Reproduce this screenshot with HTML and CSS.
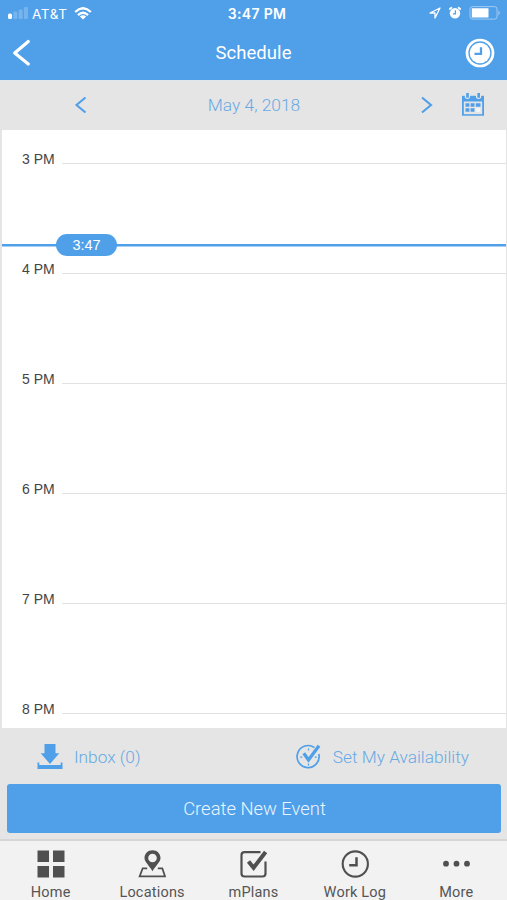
FILE: index.html
```html
<!DOCTYPE html>
<html lang="en">
<head>
<meta charset="utf-8">
<title>Schedule</title>
<link rel="stylesheet" href="styles.css">
</head>
<body>
<div class="app">
  <header class="header">
    <div class="status">
      <div class="status-left">
        <svg class="signal" width="20" height="12" viewBox="0 0 20 12" fill="#fff"><rect x="0" y="6.5" width="4" height="5.5" rx="1.5"/><g opacity=".22"><rect x="5.3" y="4.5" width="4" height="7.5" rx="1"/><rect x="10.6" y="2.5" width="4" height="9.5" rx="1"/><rect x="15.9" y="0" width="4" height="12" rx="1"/></g></svg>
        <span class="carrier">AT&amp;T</span>
        <svg class="wifi" width="18" height="13" viewBox="0 0 18 13" fill="none" stroke="#fff" stroke-width="2.3"><path d="M1.2 5Q9-2.6 16.8 5M4 8.1Q9 3.5 14 8.1"/><path d="M5.8 9.6Q9 7 12.2 9.6L9 12.6Z" fill="#fff" stroke="none"/></svg>
      </div>
      <span class="clock">3:47 PM</span>
      <div class="status-right">
        <svg width="12" height="12" viewBox="0 0 12 12" fill="none" stroke="#fff" stroke-width="1.3" stroke-linejoin="round"><path d="M11 1L1 6H6V11Z"/></svg>
        <svg width="14" height="14" viewBox="0 0 14 14"><circle cx="7" cy="7.3" r="5.2" fill="#fff"/><path d="M1.8 3L3.4 1.7M12.2 3L10.6 1.7" stroke="#fff" stroke-width="1.8" stroke-linecap="round"/><path d="M7.4 4.2V7.8H4.9" fill="none" stroke="#509fe9" stroke-width="1.2"/></svg>
        <svg width="32" height="14" viewBox="0 0 32 14"><rect x="1" y=".6" width="27" height="12.5" rx="2.5" fill="none" stroke="#fff" stroke-opacity=".45"/><rect x="2.8" y="2.3" width="16.7" height="9.2" rx=".5" fill="#fff"/><path d="M29.4 4.5Q32 7 29.4 9.5Z" fill="#fff" opacity=".5"/></svg>
      </div>
    </div>
    <div class="titlebar">
      <svg class="back" width="20" height="28" viewBox="0 0 20 28" fill="none" stroke="#fff" stroke-width="3.2" stroke-linecap="round" stroke-linejoin="round"><path d="M17.300 2.500L3.700 14L17.300 25"/></svg>
      <h1>Schedule</h1>
      <svg class="clock-button" width="30" height="30" viewBox="0 0 30 30" fill="none"><circle cx="15" cy="15" r="13" stroke="#fff" stroke-width="2.7"/><circle cx="15" cy="15" r="10.3" fill="#fff"/><path d="M16 9.3V15.8H9.5" stroke="#509fe9" stroke-width="2.3"/></svg>
    </div>
  </header>

  <nav class="datebar">
    <svg class="prev" width="14" height="18" viewBox="0 0 14 18" fill="none" stroke="#509fe9" stroke-width="2.1"><path d="M11.5 1.5L2.500 9L11.5 16.5"/></svg>
    <span class="date">May 4, 2018</span>
    <svg class="next" width="14" height="18" viewBox="0 0 14 18" fill="none" stroke="#509fe9" stroke-width="2.1"><path d="M2 1.500L11 9L2 16.500"/></svg>
    <svg class="calendar" width="22" height="23" viewBox="0 0 22 23"><path d="M0 2.800H22V22.700H0Z" fill="#509fe9"/><path d="M1.800 8.500H20.200V21.200H1.800Z" fill="#e5e5e5"/><path d="M2.800 0H8V4.800Q5.400 7.400 2.800 4.800ZM14 0H19.200V4.800Q16.600 7.400 14 4.800Z" fill="#e5e5e5"/><path d="M4.200 0H6.800V4.800H4.200ZM15.400 0H18V4.800H15.400Z" fill="#509fe9"/><path d="M3.500 10.300H7.400V13.800H3.500ZM8.600 10.300H12.500V13.800H8.600ZM13.800 10.300H18.500V13.800H13.800ZM3.500 15.200H7.400V18.800H3.500ZM8.600 15.200H12.500V18.800H8.600Z" fill="#509fe9"/><path d="M13.800 15.200H18.200V18.800H13.800Z" fill="#f6f6f6"/></svg>
  </nav>

  <main class="timeline">
    <div class="hour"><span>3 PM</span><i></i></div>
    <div class="hour"><span>4 PM</span><i></i></div>
    <div class="hour"><span>5 PM</span><i></i></div>
    <div class="hour"><span>6 PM</span><i></i></div>
    <div class="hour"><span>7 PM</span><i></i></div>
    <div class="hour"><span>8 PM</span><i></i></div>
    <div class="now"><span>3:47</span></div>
  </main>

  <section class="actions">
    <div class="links">
      <a class="inbox">
        <svg width="26" height="26" viewBox="0 0 26 26" fill="#509fe9"><path d="M7.500 0H18.500V9.300H22.300L13 20L3.700 9.300H7.500ZM.500 18.500H2.300V21H23.700V18.500H25.500V25H.500Z"/></svg>
        <span>Inbox (0)</span>
      </a>
      <a class="availability">
        <svg width="26" height="26" viewBox="0 0 26 26" fill="none" stroke="#509fe9"><path d="M18.500 3.600A11 11 0 1 0 22.800 10" stroke-width="1.700"/><path d="M12.500 4.500V6.500M4.300 13.200H6.200M18.800 13.200H20.700M12.500 19.500V21.500" stroke-width="1.200"/><path d="M7.800 9.200L12.500 16L23 1.800" stroke-width="3.300"/></svg>
        <span>Set My Availability</span>
      </a>
    </div>
    <button class="create">Create New Event</button>
  </section>

  <nav class="tabs">
    <a class="tab"><svg width="28" height="28" viewBox="0 0 28 28" fill="#505050"><path d="M.500 .500H12V12H.500ZM16 .500H27.500V12H16ZM.500 16H12V27.500H.500ZM16 16H27.500V27.500H16Z"/></svg><span>Home</span></a>
    <a class="tab"><svg width="28" height="28" viewBox="0 0 28 28"><path fill="#505050" fill-rule="evenodd" d="M14.500 .2C9.800 .2 6.500 3.700 6.500 8C6.500 12 11 15 14.500 21.300C18 15 22.500 12 22.500 8C22.500 3.700 19.200 .2 14.500 .2ZM14.500 3.700A4.300 4.300 0 1 1 14.500 12.300A4.300 4.300 0 1 1 14.500 3.700Z"/><path d="M9.200 18.300H4.700L1.700 26.300H27L24.300 18.300H19.800" fill="none" stroke="#505050" stroke-width="1.800"/></svg><span>Locations</span></a>
    <a class="tab"><svg class="check" width="28" height="28" viewBox="0 0 28 28" fill="none" stroke="#505050"><path d="M20.500 2.200H4.500Q1.500 2.200 1.500 5.200V23.500Q1.500 26.500 4.500 26.500H22.500Q25.500 26.500 25.500 23.500V11.500" stroke-width="2.200"/><path d="M8.500 11.500L13.600 17.800L25.600 2" stroke-width="4"/></svg><span>mPlans</span></a>
    <a class="tab"><svg width="28" height="28" viewBox="0 0 28 28" fill="none" stroke="#505050"><circle cx="14.300" cy="14" r="12.600" stroke-width="2.100"/><path d="M15.500 7.300V15.200H8.200" stroke-width="2.500"/></svg><span>Work Log</span></a>
    <a class="tab"><svg width="28" height="28" viewBox="0 0 28 28" fill="#505050"><circle cx="4" cy="13.700" r="2.900"/><circle cx="14.500" cy="13.700" r="2.900"/><circle cx="25" cy="13.700" r="2.900"/></svg><span>More</span></a>
  </nav>
</div>
</body>
</html>
```

FILE: styles.css
```css
* { box-sizing: border-box; }
body { margin: 0; font-family: Roboto, "Liberation Sans", sans-serif; background: #e5e5e5; }
svg { display: block; flex: none; }
.app { width: 507px; height: 900px; overflow: hidden; display: flex; flex-direction: column; }

.header { height: 80px; background: #509fe9; color: #fff; flex: none; }
.status { height: 26px; display: grid; grid-template-columns: 1fr auto 1fr; align-items: center; padding: 0 6px 0 8px; font-family: Inter, sans-serif; font-size: 14px; }
.status-left { display: flex; align-items: center; }
.carrier { margin: 0 7px 0 4px; width: 35px; letter-spacing: .6px; font-size: 13.5px; line-height: 20px; padding-top: 1px; }
.clock { font-weight: 600; letter-spacing: .35px; padding-top: 1px; margin-left: 5px; }
.status-right { display: flex; align-items: center; justify-content: flex-end; gap: 7px; }
.titlebar { height: 54px; display: grid; grid-template-columns: 50px 1fr 50px; align-items: center; padding: 0 12px 0 11px; }
.titlebar h1 { margin: 0 0 0 1px; font-size: 18.5px; font-weight: 400; letter-spacing: .05px; text-align: center; line-height: 24px; }
.clock-button { justify-self: end; }

.datebar { height: 50px; flex: none; background: #e5e5e5; border-top: 1px solid #dde5ed; display: flex; align-items: center; padding: 0 23px 2px 74px; color: #68a9e4; }
.date { flex: 1; text-align: center; font-size: 17.4px; font-weight: 300; padding-top: 1px; letter-spacing: -.02px; }
.calendar { margin-left: 28px; }

.timeline { position: relative; height: 598px; flex: none; margin: 0 1px 0 2px; padding-top: 19px; background: #fff; overflow: hidden; }
.hour { height: 110px; display: flex; align-items: flex-start; }
.hour span { width: 58px; padding-left: 20px; font: 14px/20px "Liberation Sans", sans-serif; color: #444; white-space: nowrap; }
.hour i { flex: 1; height: 1px; margin: 14px 0 0 2px; background: #e1e1e1; }
.now { position: absolute; left: 0; right: 0; top: 104px; height: 22px; display: flex; align-items: center; padding-left: 54px; background: linear-gradient(#509fe9, #509fe9) 0 9.5px / 100% 2.5px no-repeat; }
.now span { width: 61px; height: 22px; border-radius: 11px; background: #509fe9; color: #fff; text-align: center; font: 14.5px/23px "Liberation Sans", sans-serif; }

.actions { height: 111px; flex: none; padding: 0 6px 0 7px; }
.links { height: 56px; display: flex; align-items: center; padding: 1px 32px 0 30px; justify-content: space-between; color: #68a9e4; font-size: 17.3px; font-weight: 300; }
.links a { display: flex; align-items: center; gap: 11px; }
.create { display: block; width: 100%; height: 49px; padding: 0 0 0 1px; border: 0; border-radius: 3px; background: #509fe9; color: #e9f5ff; font-family: inherit; font-size: 18.4px; font-weight: 300; }

.tabs { flex: 1; border-top: 2px solid #d6d6d6; background: #f2f2f2; display: grid; grid-template-columns: repeat(5, 1fr); }
.tab { display: flex; flex-direction: column; align-items: center; padding-top: 9px; font-size: 14.5px; line-height: 18px; color: #555; gap: 6px; letter-spacing: .2px; }
.check { margin-left: 2px; }
```
